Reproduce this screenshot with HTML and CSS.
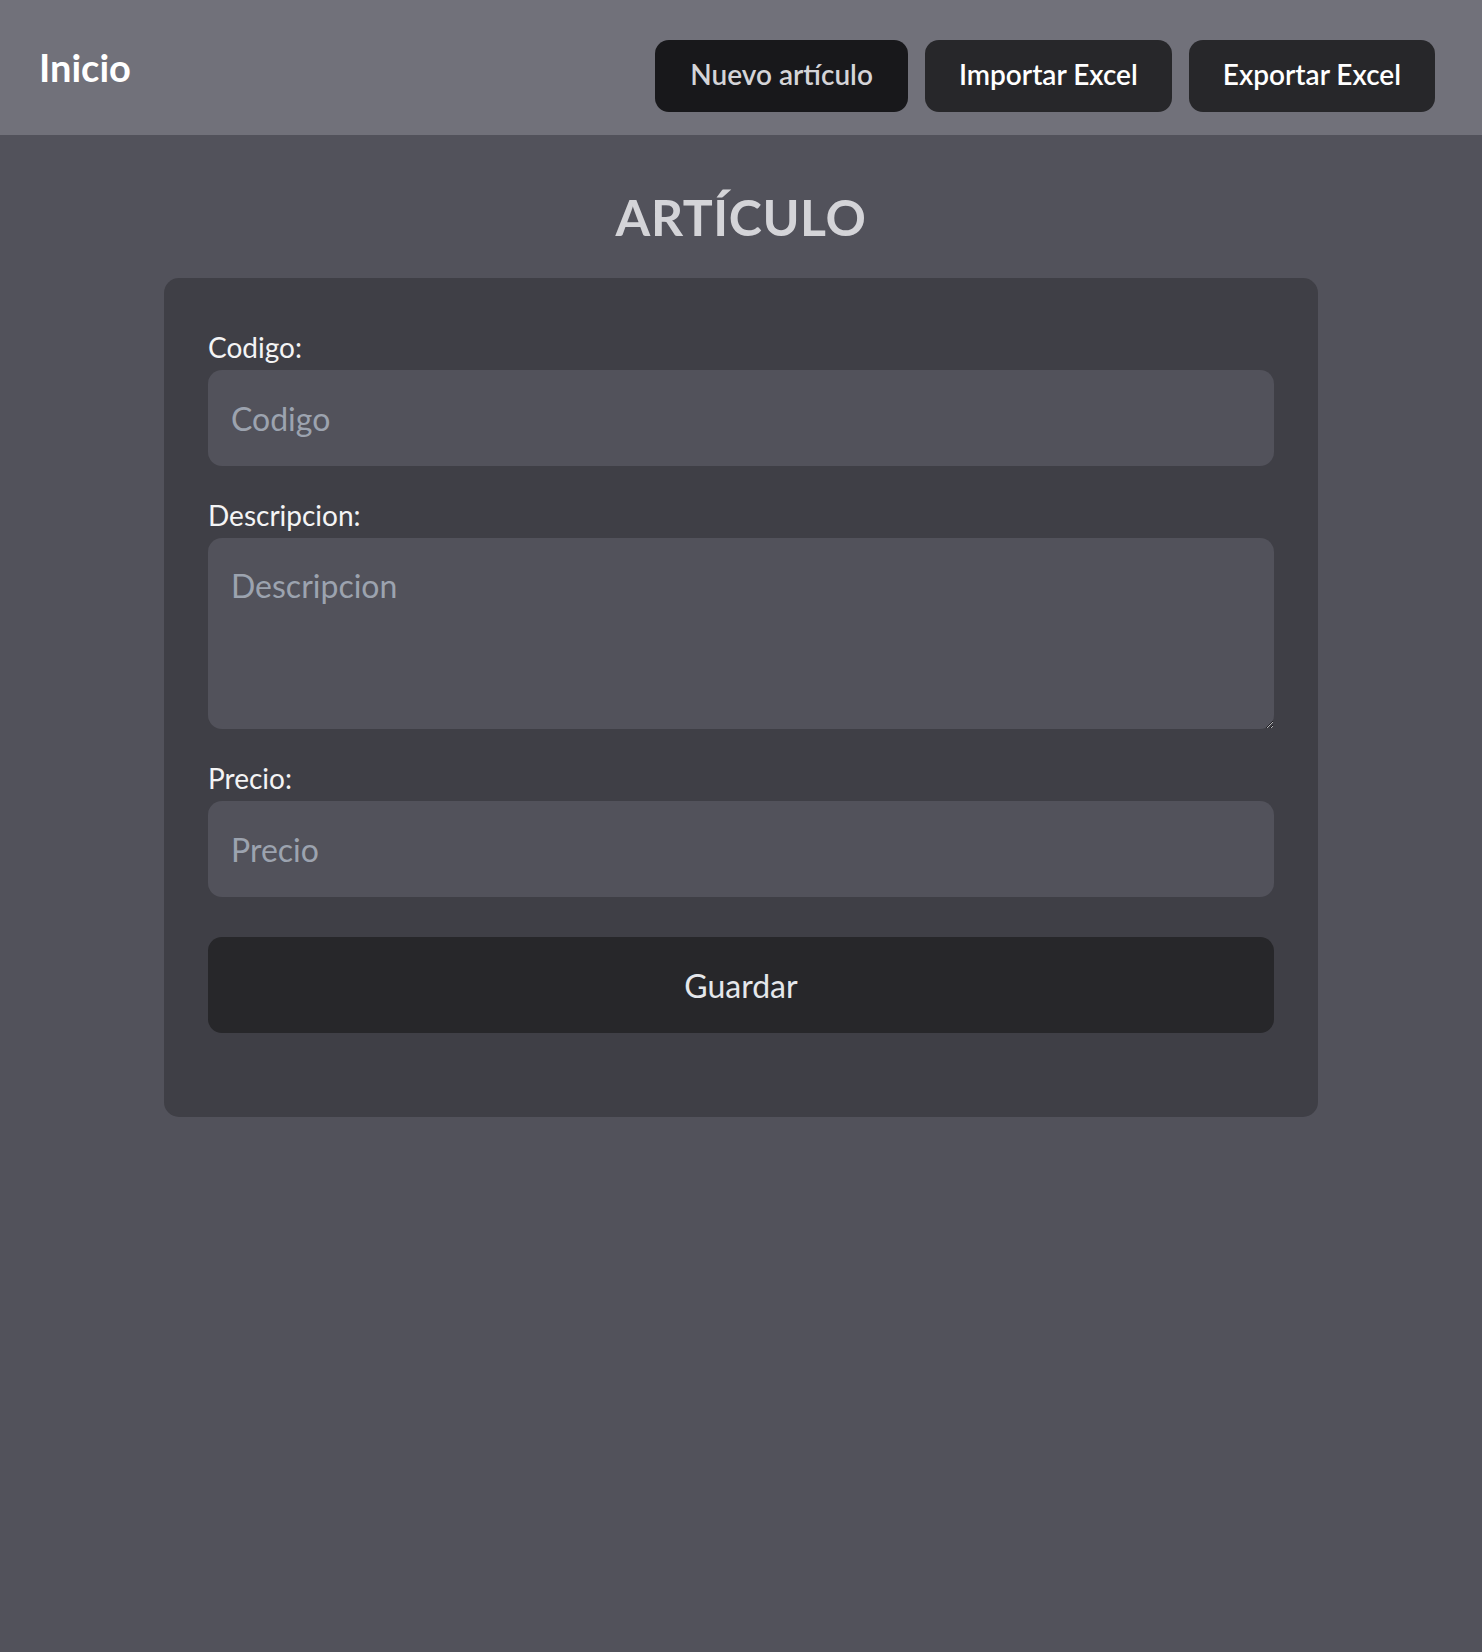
FILE: index.html
```html
<!DOCTYPE html>
<html lang="es">
<head>
<meta charset="utf-8">
<title>Artículo</title>
<link rel="stylesheet" href="styles.css">
</head>
<body>
<header class="topbar">
  <a class="brand" href="#">Inicio</a>
  <nav class="actions">
    <button class="nav-btn nav-btn-primary" type="button">Nuevo artículo</button>
    <button class="nav-btn" type="button">Importar Excel</button>
    <button class="nav-btn" type="button">Exportar Excel</button>
  </nav>
</header>
<main class="page">
  <h1 class="title">ARTÍCULO</h1>
  <form class="card">
    <div class="field">
      <label class="label" for="codigo">Codigo:</label>
      <input class="control" id="codigo" type="text" placeholder="Codigo">
    </div>
    <div class="field">
      <label class="label" for="descripcion">Descripcion:</label>
      <textarea class="control control-area" id="descripcion" placeholder="Descripcion"></textarea>
    </div>
    <div class="field">
      <label class="label" for="precio">Precio:</label>
      <input class="control" id="precio" type="text" placeholder="Precio">
    </div>
    <button class="save" type="button">Guardar</button>
  </form>
</main>
</body>
</html>
```

FILE: styles.css
```css
* {
  box-sizing: border-box;
}

html, body {
  margin: 0;
  padding: 0;
}

body {
  background: #52525b;
  min-height: 100vh;
  font-family: Lato, "Liberation Sans", sans-serif;
  color: #f4f4f5;
}

.topbar {
  height: 135px;
  background: #71717a;
  display: flex;
  align-items: flex-start;
  justify-content: space-between;
  padding: 40px 47px 0 39px;
}

.brand {
  margin-top: 9px;
  font-size: 38px;
  line-height: 37px;
  font-weight: 700;
  color: #ffffff;
  text-decoration: none;
}

.actions {
  display: flex;
  gap: 17px;
}

.nav-btn {
  height: 72px;
  padding: 0 34px 4px;
  border: none;
  border-radius: 14px;
  background: #27272a;
  color: #ffffff;
  font-family: Lato, "Liberation Sans", sans-serif;
  font-size: 28px;
  line-height: 68px;
  font-weight: 600;
  cursor: pointer;
}

.nav-btn-primary {
  background: #18181b;
  color: #d4d4d8;
  padding: 0 35px 4px;
}

.page {
  display: flex;
  flex-direction: column;
  align-items: center;
}

.title {
  margin: 52px 0 31px;
  font-size: 50px;
  line-height: 60px;
  letter-spacing: 0.6px;
  font-weight: 700;
  color: #d4d4d8;
}

.card {
  width: 1154px;
  background: #3f3f46;
  border-radius: 15px;
  padding: 51px 44px 84px;
  display: flex;
  flex-direction: column;
  gap: 31px;
}

.field {
  display: flex;
  flex-direction: column;
}

.label {
  font-size: 28px;
  line-height: 36px;
  color: #f4f4f5;
  margin-bottom: 5px;
}

.control {
  width: 100%;
  height: 96px;
  padding: 0 23px;
  border: none;
  border-radius: 14px;
  background: #52525b;
  color: #f4f4f5;
  font-family: Lato, "Liberation Sans", sans-serif;
  font-size: 32px;
  outline: none;
}

.control::placeholder {
  color: #9ca3af;
}

.control-area {
  height: 191px;
  padding: 24px 23px;
  line-height: 48px;
  resize: vertical;
  display: block;
}

.save {
  margin-top: 9px;
  height: 96px;
  width: 100%;
  border: none;
  border-radius: 14px;
  background: #27272a;
  color: #e5e7eb;
  font-family: Lato, "Liberation Sans", sans-serif;
  font-size: 32px;
  cursor: pointer;
}
```
